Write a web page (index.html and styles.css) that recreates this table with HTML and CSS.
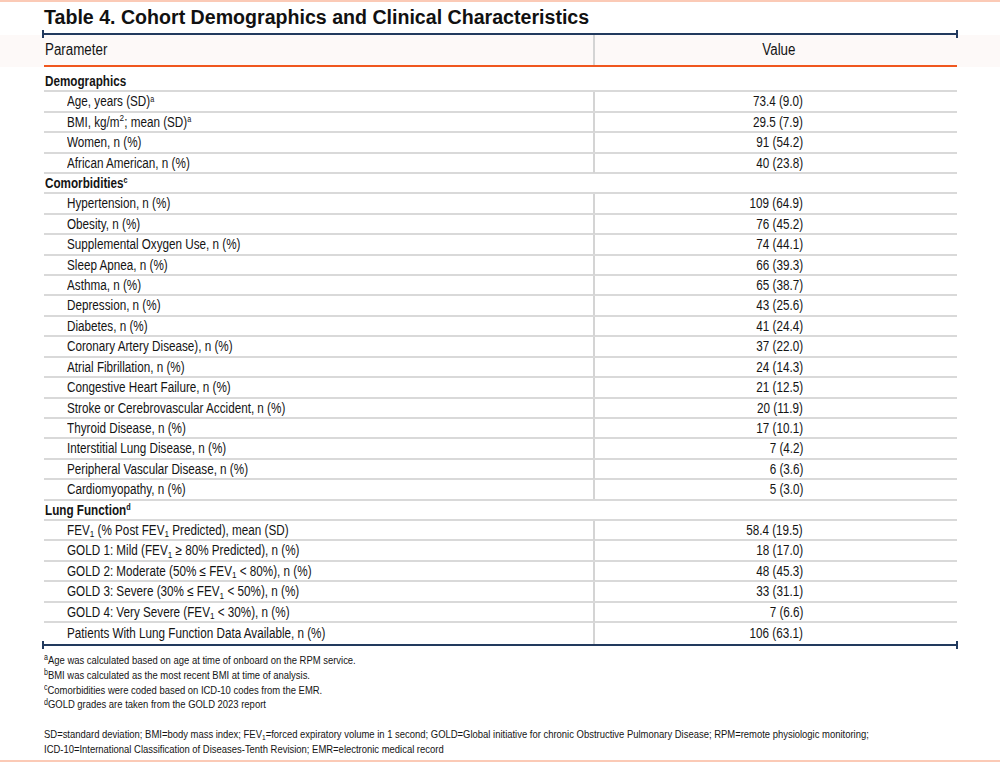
FILE: index.html
```html
<!DOCTYPE html>
<html lang="en">
<head>
<meta charset="utf-8">
<title>Table 4. Cohort Demographics and Clinical Characteristics</title>
<link rel="stylesheet" href="styles.css">
</head>
<body>
<div class="page">
  <h1 class="title">Table 4. Cohort Demographics and Clinical Characteristics</h1>
  <div class="rule"><span class="tick"></span><span class="line"></span><span class="tick"></span></div>
  <div class="head-band">
    <div class="head">
      <div class="hcell param"><span class="t">Parameter</span></div>
      <div class="hcell value"><span class="t">Value</span></div>
    </div>
  </div>
  <div class="body">
    <div class="row section"><span class="t">Demographics</span></div>
    <div class="row"><div class="p"><span class="t">Age, years (SD)<sup>a</sup></span></div><div class="v"><span class="t">73.4 (9.0)</span></div></div>
    <div class="row"><div class="p"><span class="t">BMI, kg/m<sup class="n">2</sup>; mean (SD)<sup>a</sup></span></div><div class="v"><span class="t">29.5 (7.9)</span></div></div>
    <div class="row"><div class="p"><span class="t">Women, n (%)</span></div><div class="v"><span class="t">91 (54.2)</span></div></div>
    <div class="row"><div class="p"><span class="t">African American, n (%)</span></div><div class="v"><span class="t">40 (23.8)</span></div></div>
    <div class="row section"><span class="t">Comorbidities<sup>c</sup></span></div>
    <div class="row"><div class="p"><span class="t">Hypertension, n (%)</span></div><div class="v"><span class="t">109 (64.9)</span></div></div>
    <div class="row"><div class="p"><span class="t">Obesity, n (%)</span></div><div class="v"><span class="t">76 (45.2)</span></div></div>
    <div class="row"><div class="p"><span class="t">Supplemental Oxygen Use, n (%)</span></div><div class="v"><span class="t">74 (44.1)</span></div></div>
    <div class="row"><div class="p"><span class="t">Sleep Apnea, n (%)</span></div><div class="v"><span class="t">66 (39.3)</span></div></div>
    <div class="row"><div class="p"><span class="t">Asthma, n (%)</span></div><div class="v"><span class="t">65 (38.7)</span></div></div>
    <div class="row"><div class="p"><span class="t">Depression, n (%)</span></div><div class="v"><span class="t">43 (25.6)</span></div></div>
    <div class="row"><div class="p"><span class="t">Diabetes, n (%)</span></div><div class="v"><span class="t">41 (24.4)</span></div></div>
    <div class="row"><div class="p"><span class="t">Coronary Artery Disease), n (%)</span></div><div class="v"><span class="t">37 (22.0)</span></div></div>
    <div class="row"><div class="p"><span class="t">Atrial Fibrillation, n (%)</span></div><div class="v"><span class="t">24 (14.3)</span></div></div>
    <div class="row"><div class="p"><span class="t">Congestive Heart Failure, n (%)</span></div><div class="v"><span class="t">21 (12.5)</span></div></div>
    <div class="row"><div class="p"><span class="t">Stroke or Cerebrovascular Accident, n (%)</span></div><div class="v"><span class="t">20 (11.9)</span></div></div>
    <div class="row"><div class="p"><span class="t">Thyroid Disease, n (%)</span></div><div class="v"><span class="t">17 (10.1)</span></div></div>
    <div class="row"><div class="p"><span class="t">Interstitial Lung Disease, n (%)</span></div><div class="v"><span class="t">7 (4.2)</span></div></div>
    <div class="row"><div class="p"><span class="t">Peripheral Vascular Disease, n (%)</span></div><div class="v"><span class="t">6 (3.6)</span></div></div>
    <div class="row"><div class="p"><span class="t">Cardiomyopathy, n (%)</span></div><div class="v"><span class="t">5 (3.0)</span></div></div>
    <div class="row section"><span class="t">Lung Function<sup>d</sup></span></div>
    <div class="row"><div class="p"><span class="t">FEV<sub>1</sub> (% Post FEV<sub>1</sub> Predicted), mean (SD)</span></div><div class="v"><span class="t">58.4 (19.5)</span></div></div>
    <div class="row"><div class="p"><span class="t">GOLD 1: Mild (FEV<sub>1</sub> ≥ 80% Predicted), n (%)</span></div><div class="v"><span class="t">18 (17.0)</span></div></div>
    <div class="row"><div class="p"><span class="t">GOLD 2: Moderate (50% ≤ FEV<sub>1</sub> &lt; 80%), n (%)</span></div><div class="v"><span class="t">48 (45.3)</span></div></div>
    <div class="row"><div class="p"><span class="t">GOLD 3: Severe (30% ≤ FEV<sub>1</sub> &lt; 50%), n (%)</span></div><div class="v"><span class="t">33 (31.1)</span></div></div>
    <div class="row"><div class="p"><span class="t">GOLD 4: Very Severe (FEV<sub>1</sub> &lt; 30%), n (%)</span></div><div class="v"><span class="t">7 (6.6)</span></div></div>
    <div class="row last"><div class="p"><span class="t">Patients With Lung Function Data Available, n (%)</span></div><div class="v"><span class="t">106 (63.1)</span></div></div>
  </div>
  <div class="rule"><span class="tick"></span><span class="line"></span><span class="tick"></span></div>
  <div class="notes">
    <p><sup>a</sup>Age was calculated based on age at time of onboard on the RPM service.</p>
    <p><sup>b</sup>BMI was calculated as the most recent BMI at time of analysis.</p>
    <p><sup>c</sup>Comorbidities were coded based on ICD-10 codes from the EMR.</p>
    <p><sup>d</sup>GOLD grades are taken from the GOLD 2023 report</p>
    <p class="gap">SD=standard deviation; BMI=body mass index; FEV<sub>1</sub>=forced expiratory volume in 1 second; GOLD=Global initiative for chronic Obstructive Pulmonary Disease; RPM=remote physiologic monitoring;</p>
    <p>ICD-10=International Classification of Diseases-Tenth Revision; EMR=electronic medical record</p>
  </div>
</div>
</body>
</html>
```
FILE: styles.css
```css
* {
  box-sizing: border-box;
  margin: 0;
  padding: 0;
}

html,
body {
  background: #ffffff;
}

body {
  width: 1000px;
  height: 762px;
  overflow: hidden;
  font-family: "Liberation Sans", Arial, sans-serif;
  color: #141414;
}

.page {
  height: 762px;
  border-top: 2px solid #fbcab6;
  border-bottom: 2px solid #fbcab6;
  display: flex;
  flex-direction: column;
}

.title {
  font-weight: bold;
  font-size: 19.6px;
  line-height: 22px;
  color: #111111;
  padding: 4px 0 0 44px;
  height: 31px;
}

/* condensed text (the table face is a narrow sans) */
.t {
  display: inline-block;
  white-space: nowrap;
  transform: scaleX(0.835);
  transform-origin: left center;
}

/* navy rule with end ticks */
.rule {
  display: flex;
  align-items: center;
  height: 2px;
  margin: 0 42px;
  position: relative;
  z-index: 1;
}

.rule .line {
  flex: 1;
  height: 2px;
  background: #223a5e;
}

.rule .tick {
  width: 2px;
  height: 8px;
  background: #223a5e;
  flex: none;
}

/* header band */
.head-band {
  background: #fdf9f8;
  height: 32px;
}

.head {
  margin: 0 43px 0 44px;
  height: 32px;
  border-bottom: 2px solid #f0571f;
  display: grid;
  grid-template-columns: 549px 1fr;
  font-size: 16px;
}

.hcell {
  display: flex;
  align-items: center;
}

.hcell.param {
  padding-left: 1px;
}

.hcell.value {
  justify-content: center;
  border-left: 2px solid #d4d4d4;
  padding-left: 5px;
}

.hcell.value .t {
  transform-origin: center center;
}

/* body rows */
.body {
  margin: 5px 43px 0 44px;
  font-size: 14px;
}

.row {
  height: 20.42px;
  border-bottom: 2px solid #d9d9d9;
  display: grid;
  grid-template-columns: 549px 1fr;
  line-height: 19px;
}

.row.section {
  display: block;
  font-weight: bold;
  padding-left: 1px;
  line-height: 19px;
}

.row.last {
  border-bottom: none;
  height: 21.4px;
  line-height: 21.4px;
}

.row .p {
  padding-left: 23px;
}

.row .v {
  border-left: 2px solid #d4d4d4;
  text-align: right;
  padding-right: 154px;
}

.row .v .t {
  transform-origin: right center;
}

sup,
sub {
  line-height: 0;
  font-size: 0.62em;
  position: relative;
  vertical-align: baseline;
}

sup {
  top: -0.55em;
}

sup.n {
  font-size: 0.7em;
}

sub {
  top: 0.25em;
  font-size: 0.7em;
}

/* footnotes */
.notes {
  margin: 7px 0 0 44px;
  font-size: 11.6px;
  line-height: 14.7px;
}

.notes p {
  white-space: nowrap;
  transform: scaleX(0.815);
  transform-origin: left center;
}

.notes p.gap {
  margin-top: 14.7px;
}

.notes sup {
  font-size: 0.75em;
  top: -0.45em;
}
```
